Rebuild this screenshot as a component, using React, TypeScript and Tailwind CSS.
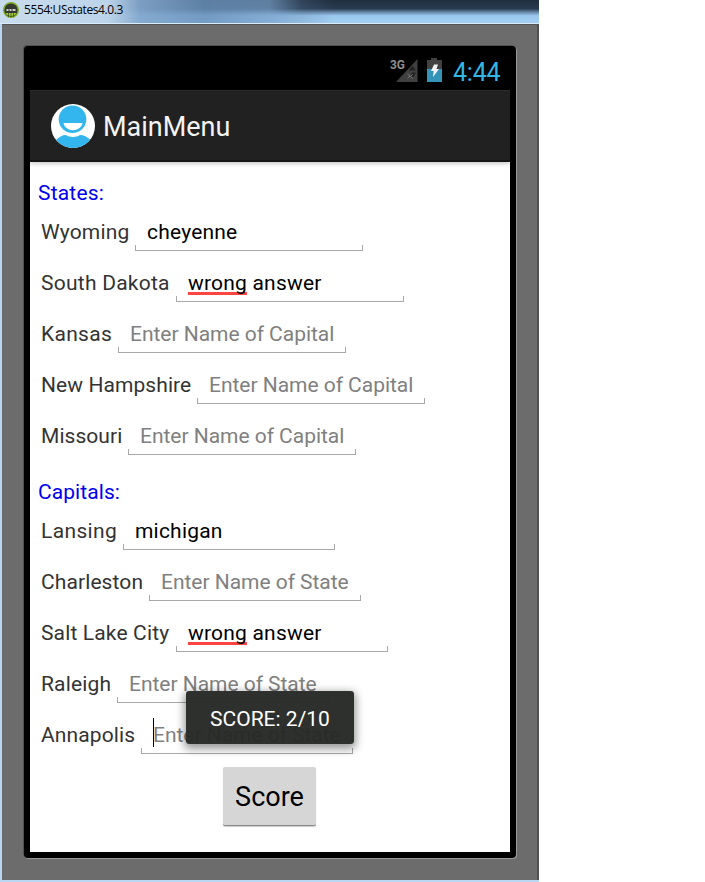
import React from 'react';

type Row = { label: string; gap: string; labelClass: string; value?: string; wrong?: boolean; caret?: boolean };

const states: Row[] = [
  { label: 'Wyoming', gap: 'w-[94px]', labelClass: 'tracking-[0.15px]', value: 'cheyenne' },
  { label: 'South Dakota', gap: 'w-[135px]', labelClass: 'tracking-[0.25px]', wrong: true },
  { label: 'Kansas', gap: 'w-[77px]', labelClass: 'tracking-[0.3px]' },
  { label: 'New Hampshire', gap: 'w-[156px]', labelClass: 'tracking-[0.08px]' },
  { label: 'Missouri', gap: 'w-[87px]', labelClass: 'tracking-[0.05px]' },
];

const capitals: Row[] = [
  { label: 'Lansing', gap: 'w-[82px]', labelClass: 'tracking-[0.36px]', value: 'michigan' },
  { label: 'Charleston', gap: 'w-[108px]', labelClass: 'tracking-[0.1px]' },
  { label: 'Salt Lake City', gap: 'w-[135px]', labelClass: 'tracking-[0.15px]', wrong: true },
  { label: 'Raleigh', gap: 'w-[76px]', labelClass: 'tracking-[0.15px]' },
  { label: 'Annapolis', gap: 'w-[100px]', labelClass: 'tracking-[0.13px]', caret: true },
];

function Field({ row, hint, width }: { row: Row; hint: string; width: string }) {
  return (
    <div className={`relative flex h-[51px] items-start pl-3 pt-[20px] ${width}`}>
      {row.caret && <span className="absolute left-3 top-[15px] h-[29px] w-px bg-black" />}
      {row.wrong ? (
        <span className="tracking-[0.2px] text-black">
          <span className="relative isolate inline-block">
            wrong
            <span className="absolute bottom-0 left-0 -z-10 h-[3px] w-full bg-[#ff4444]" />
          </span>{' '}
          answer
        </span>
      ) : row.value ? (
        <span className="tracking-[0.2px] text-black">{row.value}</span>
      ) : (
        <span className="whitespace-nowrap tracking-[-0.03px] text-[#808080]">{hint}</span>
      )}
      <span className="absolute bottom-0 left-0 h-[6px] w-full border-x border-b border-[#a8a8a8]" />
    </div>
  );
}

function Rows({ rows, hint, width }: { rows: Row[]; hint: string; width: string }) {
  return (
    <div className="pl-[11px]">
      {rows.map((row) => (
        <div key={row.label} className="flex h-[51px]">
          <div className={`shrink-0 pt-[20px] text-[#333] ${row.gap} ${row.labelClass}`}>{row.label}</div>
          <Field row={row} hint={hint} width={width} />
        </div>
      ))}
    </div>
  );
}

function StatusBar() {
  return (
    <div className="flex h-[38px] items-start bg-black pl-[359px]">
      <svg className="mt-[5px] shrink-0 overflow-visible" width="31" height="26" viewBox="0 0 31 26">
        <text x="1" y="12" fill="#8d8d8d" fontSize="13" fontWeight="700" fontFamily="Roboto, sans-serif" textLength="15" lengthAdjust="spacingAndGlyphs">3G</text>
        <path d="M7 25L28.500 2V25Z" fill="#404040" />
        <path d="M19.500 13.500l4-5 3.500 5ZM22.500 20v-4.500h4.500L24.500 20Z" fill="#222" />
        <path d="M18.500 17l2.500 2-2.500 2.500M23.500 17.500l-2 2 2 2" fill="none" stroke="#777" strokeWidth="1" />
      </svg>
      <svg className="ml-[6px] mt-[5px] shrink-0" width="17" height="26" viewBox="0 0 17 26">
        <path d="M5 1h6v2h5v9H1V3h4Z" fill="#424242" />
        <path d="M1 12h15v13H1Z" fill="#3394b8" />
        <path d="M8 7.500h4l-1.500 4.500H13L7 20l.7-6H5Z" fill="#f5f5f5" />
      </svg>
      <span className="ml-[10px] mt-[6px] text-[25px] leading-[30px] tracking-[-0.2px] text-[#33b5e5]">4:44</span>
    </div>
  );
}

function ActionBar() {
  return (
    <div className="flex h-[72px] items-center border-b-2 border-t border-b-[#151515] border-t-[#2c2c2c] bg-[#212121] pl-[21px] shadow-[0_2px_4px_rgba(0,0,0,0.2)]">
      <svg width="44" height="44" viewBox="0 0 44 44">
        <defs>
          <clipPath id="avatar"><circle cx="22" cy="22" r="22" /></clipPath>
        </defs>
        <g clipPath="url(#avatar)">
          <rect width="44" height="44" fill="#fff" />
          <circle cx="21.5" cy="15.3" r="13.8" fill="#33b5ee" />
          <path d="M12.500 19H31.500C30 28.500 14 28.500 12.500 19Z" fill="#fff" />
          <path d="M5 36C8 33 11 31 15 31C18 33.500 26 33.500 29 31C33 31 36 33 39 35.500V44H5Z" fill="#33b5ee" />
        </g>
      </svg>
      <span className="ml-2 mt-[2px] text-[27px] text-[#f3f3f3]">MainMenu</span>
    </div>
  );
}

export default function App() {
  return (
    <div className="h-[882px] w-[705px] overflow-hidden bg-white font-['Roboto','Liberation_Sans',sans-serif]">
      <div className="flex h-[882px] w-[539px] flex-col bg-[#b9d7f2]">
        <div className="flex h-6 shrink-0 items-start border-b border-[#d9edff] bg-[linear-gradient(90deg,#c9dced_0%,#bcd4ea_20%,rgba(130,167,204,0.92)_26%,rgba(105,145,185,0.82)_38%,rgba(120,160,200,0.7)_50%,rgba(90,125,160,0.25)_56%,rgba(168,204,237,0)_62%),linear-gradient(180deg,#202e3e_0%,#293b50_38%,#6e90b1_55%,#9bc7ed_68%,#a5d0f4_100%)] pl-[3px]">
          <svg className="mt-[2px] shrink-0" width="17" height="17" viewBox="0 0 17 17">
            <circle cx="8" cy="8" r="7.3" fill="#343a30" stroke="#80ad25" strokeWidth="1.4" />
            <path d="M2.5 11h11c-2 4-9 4-11 0Z" fill="#a4ce32" />
            <path d="M3.5 8h2M6.5 8h2M9.5 8h3" stroke="#fff" strokeWidth="1.7" />
            <path d="M5.5 11v4M8 11v4M10.5 11v4" stroke="#37431f" strokeWidth=".7" />
          </svg>
          <span className="ml-1 mt-[2px] whitespace-nowrap font-['Open_Sans','Noto_Sans',sans-serif] text-[12px] leading-[16px] tracking-[-0.4px] text-black">5554:USstates4.0.3</span>
        </div>
        <div className="ml-[2px] h-[856px] shrink-0 border-r-2 border-t border-r-[#515151] border-t-[#555] bg-[#6c6c6c] pl-[22px] pt-[21px]">
          <div className="h-[812px] w-[492px] rounded-[4px] bg-black px-[6px] pt-[6px] shadow-[1px_1px_0_#999,-1px_-1px_0_#505050]">
            <div className="relative h-[800px] overflow-hidden bg-white text-[21px] leading-[24px]">
              <StatusBar />
              <ActionBar />
              <div className="h-[38px] pl-2 pt-[19px] tracking-[0.2px] text-[#0000ee]">States:</div>
              <Rows rows={states} hint="Enter Name of Capital" width="w-[228px]" />
              <div className="h-[44px] pl-2 pt-[25px] tracking-[0.08px] text-[#0000ee]">Capitals:</div>
              <Rows rows={capitals} hint="Enter Name of State" width="w-[212px]" />
              <button className="ml-[193px] mt-[13px] h-[59px] w-[93px] rounded-[2px] border-b border-[#888] bg-[#d6d6d6] pt-px text-[27px] text-black shadow-[0_1px_1px_#ccc]">Score</button>
              <div className="absolute left-[156px] top-[639px] flex h-[53px] w-[168px] items-center justify-center rounded-[3px] bg-[#252825]/96 pt-[2px] text-white shadow-[0_3px_9px_2px_rgba(0,0,0,0.4)]">SCORE: 2/10</div>
            </div>
          </div>
        </div>
      </div>
    </div>
  );
}
